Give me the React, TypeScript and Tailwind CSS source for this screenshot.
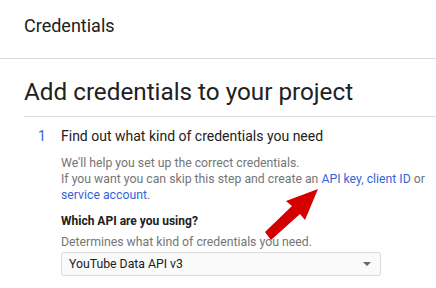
import React from 'react';

const App: React.FC = () => {
  return (
    <div className="relative w-[436px] h-[288px] overflow-hidden bg-white text-[#212121]" style={{ fontFamily: 'Roboto, "Liberation Sans", sans-serif' }}>
      <header className="h-[59px] border-b border-[#dadada] px-6 pt-[14px]">
        <h1 className="text-[18px] leading-[24px] font-normal">Credentials</h1>
      </header>

      <div className="ml-6 mt-[17px] border-b border-[#dadada] pb-2">
        <h2 className="text-[24.25px] leading-[32px] font-normal">Add credentials to your project</h2>
      </div>

      <div className="mt-[9px] flex">
        <div className="w-[61px] pl-[38px] text-[14px] leading-[20px] text-[#3367d6]">1</div>
        <div className="flex-1">
          <h3 className="text-[14px] leading-[20px] font-normal">Find out what kind of credentials you need</h3>
          <p className="mt-[9px] text-[12.25px] leading-[16px] text-[#757575]">
            We'll help you set up the correct credentials.
            <br />
            If you want you can skip this step and create an{' '}
            <a className="text-[#3367d6]">API key</a>, <a className="text-[#3367d6]">client ID</a> or{' '}
            <a className="text-[#3367d6]">service account</a>.
          </p>
          <div className="mt-[10px] text-[12px] leading-[16px] font-bold">Which API are you using?</div>
          <div className="mt-[5px] text-[12.25px] leading-[16px] text-[#757575]">Determines what kind of credentials you need.</div>
          <div className="mt-[2px] w-[320px] h-[24px] flex items-center justify-between rounded-[2px] border border-[#dcdcdc] bg-[#fafafa] pl-[7px] pr-[9px]">
            <span className="text-[12.25px] leading-[16px] text-[#212121]">YouTube Data API v3</span>
            <svg width="8" height="4" viewBox="0 0 8 4">
              <path d="M0 0 L8 0 L4 4 Z" fill="#666" />
            </svg>
          </div>
        </div>
      </div>

      <svg className="absolute left-0 top-0 pointer-events-none" width="436" height="288" viewBox="0 0 436 288">
        <polygon points="318,189 305,220 300,214 271,240 265,232 292,206 286,201" fill="#d40000" />
      </svg>
    </div>
  );
};

export default App;
